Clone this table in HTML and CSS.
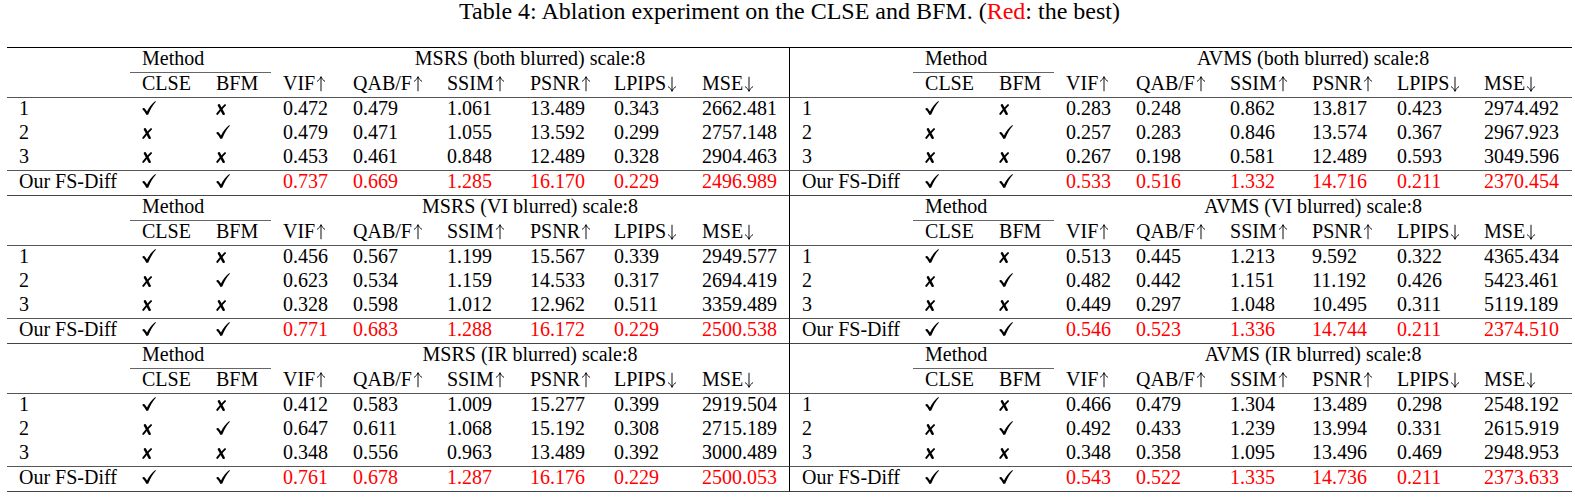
FILE: index.html
```html
<!DOCTYPE html>
<html>
<head>
<meta charset="utf-8">
<title>Table 4</title>
<link rel="stylesheet" href="styles.css">
</head>
<body>
<svg class="defs" width="0" height="0" aria-hidden="true">
<defs>
<path id="ckp" d="M0.2,7.9 C1.0,6.9 2.4,6.8 3.2,7.9 L5.0,10.4 C7.2,6.2 10.2,2.4 13.4,0.1 L13.9,0.7 C11.0,3.8 8.4,8.2 6.3,13.6 L4.5,13.9 C3.4,11.6 1.9,9.6 0.2,7.9 Z"/>
<g id="xxp"><path d="M3.0,1.3 C4.6,4.0 6.0,6.9 7.6,9.8" stroke-width="2.5"/><path d="M9.0,1.1 C6.2,3.8 3.6,6.8 1.3,9.9" stroke-width="1.9"/></g>
<g id="upp"><path d="M5,15.2 V1.2" stroke-width="0.95"/><path d="M1,5.4 C2.8,4.3 4.2,2.8 5,0.6 C5.8,2.8 7.2,4.3 9,5.4" stroke-width="0.95"/></g>
<g id="dnp"><path d="M5,0.8 V14.8" stroke-width="0.95"/><path d="M1,10.6 C2.8,11.7 4.2,13.2 5,15.4 C5.8,13.2 7.2,11.7 9,10.6" stroke-width="0.95"/></g>
</defs>
</svg>
<table class="abl">
<caption class="cap">Table 4: Ablation experiment on the CLSE and BFM. (<span class="red">Red</span>: the best)</caption>
<colgroup>
<col class="w-c0l"><col class="w-clse"><col class="w-bfm"><col class="w-vif"><col class="w-qab"><col class="w-ssiml"><col class="w-psnrl"><col class="w-lpipsl"><col class="w-mse">
<col class="w-c0r"><col class="w-clse"><col class="w-bfm"><col class="w-vif"><col class="w-qab"><col class="w-ssimr"><col class="w-psnrr"><col class="w-lpipsr"><col class="w-mse">
</colgroup>

<tbody class="sec">
<tr class="grp"><td></td><td colspan="2" class="mth">Method</td><td colspan="6" class="ds sep">MSRS (both blurred) scale:8</td><td></td><td colspan="2" class="mth">Method</td><td colspan="6" class="ds">AVMS (both blurred) scale:8</td></tr>
<tr class="hdr"><td></td><td>CLSE</td><td>BFM</td><td>VIF<svg class="ar" viewBox="0 0 10 16"><use href="#upp"/></svg></td><td>QAB/F<svg class="ar" viewBox="0 0 10 16"><use href="#upp"/></svg></td><td>SSIM<svg class="ar" viewBox="0 0 10 16"><use href="#upp"/></svg></td><td>PSNR<svg class="ar" viewBox="0 0 10 16"><use href="#upp"/></svg></td><td>LPIPS<svg class="ar" viewBox="0 0 10 16"><use href="#dnp"/></svg></td><td class="sep">MSE<svg class="ar" viewBox="0 0 10 16"><use href="#dnp"/></svg></td><td></td><td>CLSE</td><td>BFM</td><td>VIF<svg class="ar" viewBox="0 0 10 16"><use href="#upp"/></svg></td><td>QAB/F<svg class="ar" viewBox="0 0 10 16"><use href="#upp"/></svg></td><td>SSIM<svg class="ar" viewBox="0 0 10 16"><use href="#upp"/></svg></td><td>PSNR<svg class="ar" viewBox="0 0 10 16"><use href="#upp"/></svg></td><td>LPIPS<svg class="ar" viewBox="0 0 10 16"><use href="#dnp"/></svg></td><td>MSE<svg class="ar" viewBox="0 0 10 16"><use href="#dnp"/></svg></td></tr>
<tr><td>1</td><td><svg class="ck" viewBox="0 0 14 14"><use href="#ckp"/></svg></td><td><svg class="xx" viewBox="0 0 10 11"><use href="#xxp"/></svg></td><td>0.472</td><td>0.479</td><td>1.061</td><td>13.489</td><td>0.343</td><td class="sep">2662.481</td><td>1</td><td><svg class="ck" viewBox="0 0 14 14"><use href="#ckp"/></svg></td><td><svg class="xx" viewBox="0 0 10 11"><use href="#xxp"/></svg></td><td>0.283</td><td>0.248</td><td>0.862</td><td>13.817</td><td>0.423</td><td>2974.492</td></tr>
<tr><td>2</td><td><svg class="xx" viewBox="0 0 10 11"><use href="#xxp"/></svg></td><td><svg class="ck" viewBox="0 0 14 14"><use href="#ckp"/></svg></td><td>0.479</td><td>0.471</td><td>1.055</td><td>13.592</td><td>0.299</td><td class="sep">2757.148</td><td>2</td><td><svg class="xx" viewBox="0 0 10 11"><use href="#xxp"/></svg></td><td><svg class="ck" viewBox="0 0 14 14"><use href="#ckp"/></svg></td><td>0.257</td><td>0.283</td><td>0.846</td><td>13.574</td><td>0.367</td><td>2967.923</td></tr>
<tr class="pre"><td>3</td><td><svg class="xx" viewBox="0 0 10 11"><use href="#xxp"/></svg></td><td><svg class="xx" viewBox="0 0 10 11"><use href="#xxp"/></svg></td><td>0.453</td><td>0.461</td><td>0.848</td><td>12.489</td><td>0.328</td><td class="sep">2904.463</td><td>3</td><td><svg class="xx" viewBox="0 0 10 11"><use href="#xxp"/></svg></td><td><svg class="xx" viewBox="0 0 10 11"><use href="#xxp"/></svg></td><td>0.267</td><td>0.198</td><td>0.581</td><td>12.489</td><td>0.593</td><td>3049.596</td></tr>
<tr class="best"><td>Our FS-Diff</td><td><svg class="ck" viewBox="0 0 14 14"><use href="#ckp"/></svg></td><td><svg class="ck" viewBox="0 0 14 14"><use href="#ckp"/></svg></td><td class="red">0.737</td><td class="red">0.669</td><td class="red">1.285</td><td class="red">16.170</td><td class="red">0.229</td><td class="red sep">2496.989</td><td>Our FS-Diff</td><td><svg class="ck" viewBox="0 0 14 14"><use href="#ckp"/></svg></td><td><svg class="ck" viewBox="0 0 14 14"><use href="#ckp"/></svg></td><td class="red">0.533</td><td class="red">0.516</td><td class="red">1.332</td><td class="red">14.716</td><td class="red">0.211</td><td class="red">2370.454</td></tr>
</tbody>

<tbody class="sec">
<tr class="grp"><td></td><td colspan="2" class="mth">Method</td><td colspan="6" class="ds sep">MSRS (VI blurred) scale:8</td><td></td><td colspan="2" class="mth">Method</td><td colspan="6" class="ds">AVMS (VI blurred) scale:8</td></tr>
<tr class="hdr"><td></td><td>CLSE</td><td>BFM</td><td>VIF<svg class="ar" viewBox="0 0 10 16"><use href="#upp"/></svg></td><td>QAB/F<svg class="ar" viewBox="0 0 10 16"><use href="#upp"/></svg></td><td>SSIM<svg class="ar" viewBox="0 0 10 16"><use href="#upp"/></svg></td><td>PSNR<svg class="ar" viewBox="0 0 10 16"><use href="#upp"/></svg></td><td>LPIPS<svg class="ar" viewBox="0 0 10 16"><use href="#dnp"/></svg></td><td class="sep">MSE<svg class="ar" viewBox="0 0 10 16"><use href="#dnp"/></svg></td><td></td><td>CLSE</td><td>BFM</td><td>VIF<svg class="ar" viewBox="0 0 10 16"><use href="#upp"/></svg></td><td>QAB/F<svg class="ar" viewBox="0 0 10 16"><use href="#upp"/></svg></td><td>SSIM<svg class="ar" viewBox="0 0 10 16"><use href="#upp"/></svg></td><td>PSNR<svg class="ar" viewBox="0 0 10 16"><use href="#upp"/></svg></td><td>LPIPS<svg class="ar" viewBox="0 0 10 16"><use href="#dnp"/></svg></td><td>MSE<svg class="ar" viewBox="0 0 10 16"><use href="#dnp"/></svg></td></tr>
<tr><td>1</td><td><svg class="ck" viewBox="0 0 14 14"><use href="#ckp"/></svg></td><td><svg class="xx" viewBox="0 0 10 11"><use href="#xxp"/></svg></td><td>0.456</td><td>0.567</td><td>1.199</td><td>15.567</td><td>0.339</td><td class="sep">2949.577</td><td>1</td><td><svg class="ck" viewBox="0 0 14 14"><use href="#ckp"/></svg></td><td><svg class="xx" viewBox="0 0 10 11"><use href="#xxp"/></svg></td><td>0.513</td><td>0.445</td><td>1.213</td><td>9.592</td><td>0.322</td><td>4365.434</td></tr>
<tr><td>2</td><td><svg class="xx" viewBox="0 0 10 11"><use href="#xxp"/></svg></td><td><svg class="ck" viewBox="0 0 14 14"><use href="#ckp"/></svg></td><td>0.623</td><td>0.534</td><td>1.159</td><td>14.533</td><td>0.317</td><td class="sep">2694.419</td><td>2</td><td><svg class="xx" viewBox="0 0 10 11"><use href="#xxp"/></svg></td><td><svg class="ck" viewBox="0 0 14 14"><use href="#ckp"/></svg></td><td>0.482</td><td>0.442</td><td>1.151</td><td>11.192</td><td>0.426</td><td>5423.461</td></tr>
<tr class="pre"><td>3</td><td><svg class="xx" viewBox="0 0 10 11"><use href="#xxp"/></svg></td><td><svg class="xx" viewBox="0 0 10 11"><use href="#xxp"/></svg></td><td>0.328</td><td>0.598</td><td>1.012</td><td>12.962</td><td>0.511</td><td class="sep">3359.489</td><td>3</td><td><svg class="xx" viewBox="0 0 10 11"><use href="#xxp"/></svg></td><td><svg class="xx" viewBox="0 0 10 11"><use href="#xxp"/></svg></td><td>0.449</td><td>0.297</td><td>1.048</td><td>10.495</td><td>0.311</td><td>5119.189</td></tr>
<tr class="best"><td>Our FS-Diff</td><td><svg class="ck" viewBox="0 0 14 14"><use href="#ckp"/></svg></td><td><svg class="ck" viewBox="0 0 14 14"><use href="#ckp"/></svg></td><td class="red">0.771</td><td class="red">0.683</td><td class="red">1.288</td><td class="red">16.172</td><td class="red">0.229</td><td class="red sep">2500.538</td><td>Our FS-Diff</td><td><svg class="ck" viewBox="0 0 14 14"><use href="#ckp"/></svg></td><td><svg class="ck" viewBox="0 0 14 14"><use href="#ckp"/></svg></td><td class="red">0.546</td><td class="red">0.523</td><td class="red">1.336</td><td class="red">14.744</td><td class="red">0.211</td><td class="red">2374.510</td></tr>
</tbody>

<tbody class="sec">
<tr class="grp"><td></td><td colspan="2" class="mth">Method</td><td colspan="6" class="ds sep">MSRS (IR blurred) scale:8</td><td></td><td colspan="2" class="mth">Method</td><td colspan="6" class="ds">AVMS (IR blurred) scale:8</td></tr>
<tr class="hdr"><td></td><td>CLSE</td><td>BFM</td><td>VIF<svg class="ar" viewBox="0 0 10 16"><use href="#upp"/></svg></td><td>QAB/F<svg class="ar" viewBox="0 0 10 16"><use href="#upp"/></svg></td><td>SSIM<svg class="ar" viewBox="0 0 10 16"><use href="#upp"/></svg></td><td>PSNR<svg class="ar" viewBox="0 0 10 16"><use href="#upp"/></svg></td><td>LPIPS<svg class="ar" viewBox="0 0 10 16"><use href="#dnp"/></svg></td><td class="sep">MSE<svg class="ar" viewBox="0 0 10 16"><use href="#dnp"/></svg></td><td></td><td>CLSE</td><td>BFM</td><td>VIF<svg class="ar" viewBox="0 0 10 16"><use href="#upp"/></svg></td><td>QAB/F<svg class="ar" viewBox="0 0 10 16"><use href="#upp"/></svg></td><td>SSIM<svg class="ar" viewBox="0 0 10 16"><use href="#upp"/></svg></td><td>PSNR<svg class="ar" viewBox="0 0 10 16"><use href="#upp"/></svg></td><td>LPIPS<svg class="ar" viewBox="0 0 10 16"><use href="#dnp"/></svg></td><td>MSE<svg class="ar" viewBox="0 0 10 16"><use href="#dnp"/></svg></td></tr>
<tr><td>1</td><td><svg class="ck" viewBox="0 0 14 14"><use href="#ckp"/></svg></td><td><svg class="xx" viewBox="0 0 10 11"><use href="#xxp"/></svg></td><td>0.412</td><td>0.583</td><td>1.009</td><td>15.277</td><td>0.399</td><td class="sep">2919.504</td><td>1</td><td><svg class="ck" viewBox="0 0 14 14"><use href="#ckp"/></svg></td><td><svg class="xx" viewBox="0 0 10 11"><use href="#xxp"/></svg></td><td>0.466</td><td>0.479</td><td>1.304</td><td>13.489</td><td>0.298</td><td>2548.192</td></tr>
<tr><td>2</td><td><svg class="xx" viewBox="0 0 10 11"><use href="#xxp"/></svg></td><td><svg class="ck" viewBox="0 0 14 14"><use href="#ckp"/></svg></td><td>0.647</td><td>0.611</td><td>1.068</td><td>15.192</td><td>0.308</td><td class="sep">2715.189</td><td>2</td><td><svg class="xx" viewBox="0 0 10 11"><use href="#xxp"/></svg></td><td><svg class="ck" viewBox="0 0 14 14"><use href="#ckp"/></svg></td><td>0.492</td><td>0.433</td><td>1.239</td><td>13.994</td><td>0.331</td><td>2615.919</td></tr>
<tr class="pre"><td>3</td><td><svg class="xx" viewBox="0 0 10 11"><use href="#xxp"/></svg></td><td><svg class="xx" viewBox="0 0 10 11"><use href="#xxp"/></svg></td><td>0.348</td><td>0.556</td><td>0.963</td><td>13.489</td><td>0.392</td><td class="sep">3000.489</td><td>3</td><td><svg class="xx" viewBox="0 0 10 11"><use href="#xxp"/></svg></td><td><svg class="xx" viewBox="0 0 10 11"><use href="#xxp"/></svg></td><td>0.348</td><td>0.358</td><td>1.095</td><td>13.496</td><td>0.469</td><td>2948.953</td></tr>
<tr class="best"><td>Our FS-Diff</td><td><svg class="ck" viewBox="0 0 14 14"><use href="#ckp"/></svg></td><td><svg class="ck" viewBox="0 0 14 14"><use href="#ckp"/></svg></td><td class="red">0.761</td><td class="red">0.678</td><td class="red">1.287</td><td class="red">16.176</td><td class="red">0.229</td><td class="red sep">2500.053</td><td>Our FS-Diff</td><td><svg class="ck" viewBox="0 0 14 14"><use href="#ckp"/></svg></td><td><svg class="ck" viewBox="0 0 14 14"><use href="#ckp"/></svg></td><td class="red">0.543</td><td class="red">0.522</td><td class="red">1.335</td><td class="red">14.736</td><td class="red">0.211</td><td class="red">2373.633</td></tr>
</tbody>
</table>
</body>
</html>
```

FILE: styles.css
```css
html, body {
  margin: 0;
  padding: 0;
  background: #fff;
}
body {
  padding-left: 7px;
  color: #000;
  font-family: "Liberation Serif", "Times New Roman", serif;
}
.defs {
  display: block;
  width: 0;
  height: 0;
  overflow: hidden;
}
.abl {
  width: 1565px;
  table-layout: fixed;
  border-collapse: separate;
  border-spacing: 0;
  border-top: 1px solid #000;
  font-size: 20px;
}
.cap {
  font-size: 24px;
  line-height: 22px;
  padding-bottom: 25px;
  text-align: center;
  white-space: nowrap;
}
.red { color: #f00; }

.w-c0l { width: 123px; }
.w-c0r { width: 123px; }
.w-clse { width: 74px; }
.w-bfm { width: 67px; }
.w-vif { width: 70px; }
.w-qab { width: 94px; }
.w-ssiml { width: 83px; }
.w-ssimr { width: 82px; }
.w-psnrl { width: 84px; }
.w-psnrr { width: 85px; }
.w-lpipsl { width: 88px; }
.w-lpipsr { width: 87px; }
.w-mse { width: 100px; }

.abl td {
  padding: 0 12px 3px 12px;
  height: 21px;
  line-height: 21px;
  vertical-align: top;
  text-align: left;
  white-space: nowrap;
  overflow: visible;
}
.abl td.sep { border-right: 1px solid #000; }
.abl td.ds { text-align: center; }
.abl td.mth { border-bottom: 1px solid #666; }
.abl tr.hdr td { border-bottom: 1px solid #555; }
.abl tr.pre td { border-bottom: 1px solid #555; }
.abl tr.best td { border-bottom: 1px solid #444; }

.ar {
  width: 10px;
  height: 16px;
  margin-left: 1px;
  vertical-align: -2px;
  fill: none;
  stroke: #000;
}
.ck {
  width: 14px;
  height: 14px;
  vertical-align: baseline;
  fill: #000;
}
.xx {
  width: 10px;
  height: 11px;
  vertical-align: baseline;
  fill: none;
  stroke: #000;
  stroke-linecap: round;
}
```
